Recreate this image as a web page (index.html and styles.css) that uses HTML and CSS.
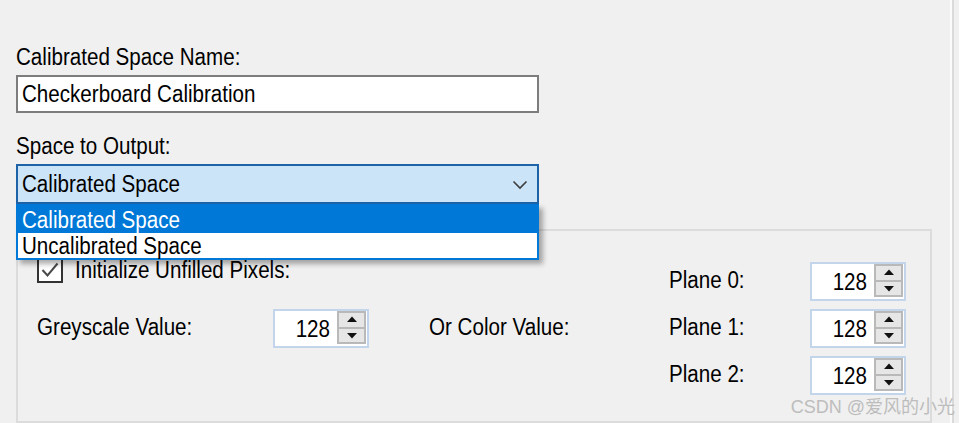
FILE: index.html
```html
<!DOCTYPE html>
<html lang="en">
<head>
<meta charset="utf-8">
<title>Calibration</title>
<link rel="stylesheet" href="styles.css">
</head>
<body>
<div class="window">
  <div class="panel">
    <div class="lbl"><span class="t">Calibrated Space Name:</span></div>
    <div class="textbox"><span class="t">Checkerboard Calibration</span></div>
    <div class="lbl lbl-output"><span class="t">Space to Output:</span></div>
    <div class="combo">
      <span class="combo-text"><span class="t">Calibrated Space</span></span>
      <svg class="chevron" width="16" height="10" viewBox="0 0 16 10"><polyline points="1.5,1.5 8,8 14.5,1.5" fill="none" stroke="#3c3c3c" stroke-width="1.6"/></svg>
      <ul class="dropdown">
        <li class="item item-selected"><span class="t">Calibrated Space</span></li>
        <li class="item item-plain"><span class="t">Uncalibrated Space</span></li>
      </ul>
    </div>
    <div class="group">
      <div class="group-left">
        <div class="check-row">
          <span class="checkbox"><svg width="22" height="22" viewBox="0 0 22 22"><polyline points="3.5,11 8.5,16.5 18.5,4.5" fill="none" stroke="#4a4a4a" stroke-width="2"/></svg></span>
          <span class="check-label"><span class="t">Initialize Unfilled Pixels:</span></span>
        </div>
        <div class="grey-row">
          <span class="row-label grey-label"><span class="t">Greyscale Value:</span></span>
          <div class="spinner">
            <span class="spin-value"><span class="t">128</span></span>
            <span class="spin-btns">
              <span class="spin-btn"><svg width="10" height="7" viewBox="0 0 10 7"><polygon points="0,6 5,0.5 10,6" fill="#111"/></svg></span>
              <span class="spin-btn spin-down"><svg width="10" height="7" viewBox="0 0 10 7"><polygon points="0,1 5,6.5 10,1" fill="#111"/></svg></span>
            </span>
          </div>
          <span class="row-label or-label"><span class="t">Or Color Value:</span></span>
        </div>
      </div>
      <div class="group-right">
        <div class="plane-row">
          <span class="row-label plane-label"><span class="t">Plane 0:</span></span>
          <div class="spinner">
            <span class="spin-value"><span class="t">128</span></span>
            <span class="spin-btns">
              <span class="spin-btn"><svg width="10" height="7" viewBox="0 0 10 7"><polygon points="0,6 5,0.5 10,6" fill="#111"/></svg></span>
              <span class="spin-btn spin-down"><svg width="10" height="7" viewBox="0 0 10 7"><polygon points="0,1 5,6.5 10,1" fill="#111"/></svg></span>
            </span>
          </div>
        </div>
        <div class="plane-row">
          <span class="row-label plane-label"><span class="t">Plane 1:</span></span>
          <div class="spinner">
            <span class="spin-value"><span class="t">128</span></span>
            <span class="spin-btns">
              <span class="spin-btn"><svg width="10" height="7" viewBox="0 0 10 7"><polygon points="0,6 5,0.5 10,6" fill="#111"/></svg></span>
              <span class="spin-btn spin-down"><svg width="10" height="7" viewBox="0 0 10 7"><polygon points="0,1 5,6.5 10,1" fill="#111"/></svg></span>
            </span>
          </div>
        </div>
        <div class="plane-row">
          <span class="row-label plane-label"><span class="t">Plane 2:</span></span>
          <div class="spinner">
            <span class="spin-value"><span class="t">128</span></span>
            <span class="spin-btns">
              <span class="spin-btn"><svg width="10" height="7" viewBox="0 0 10 7"><polygon points="0,6 5,0.5 10,6" fill="#111"/></svg></span>
              <span class="spin-btn spin-down"><svg width="10" height="7" viewBox="0 0 10 7"><polygon points="0,1 5,6.5 10,1" fill="#111"/></svg></span>
            </span>
          </div>
        </div>
      </div>
    </div>
  </div>
  <div class="rail"></div>
  <div class="watermark">CSDN @爱风的小光</div>
</div>
</body>
</html>
```
FILE: styles.css
```css
* { box-sizing: border-box; }

html, body {
  margin: 0;
  padding: 0;
  background: #f0f0f0;
  height: 423px;
  overflow: hidden;
}

body {
  font-family: "Liberation Sans", Arial, sans-serif;
  font-size: 20.6px;
  line-height: 28px;
  color: #000;
}

/* Windows-style tall, narrow text rendering */
.t {
  display: inline-block;
  line-height: 18px;
  transform: scaleY(1.2);
  transform-origin: 50% 50%;
  white-space: nowrap;
}

.window {
  position: relative;
  display: flex;
  height: 423px;
}

.panel {
  width: 952px;
  height: 423px;
  padding: 43px 0 0 16px;
  border-right: 2px solid #fbfbfb;
}

.rail {
  width: 2px;
  height: 423px;
  background: #dadada;
}

.lbl {
  height: 28px;
  white-space: nowrap;
}

.textbox {
  margin-top: 4px;
  width: 523px;
  height: 38px;
  border: 2px solid #7d7d7d;
  background: #fff;
  padding-left: 4px;
  line-height: 34px;
  white-space: nowrap;
}

.lbl-output {
  margin-top: 19px;
}

.combo {
  position: relative;
  margin-top: 4px;
  width: 523px;
  height: 40px;
  border: 2px solid #1e63a8;
  background: #cce4f7;
  padding-left: 4px;
  display: flex;
  align-items: center;
  line-height: 36px;
  z-index: 5;
}

.combo-text {
  flex: 1;
  white-space: nowrap;
}

.chevron {
  margin-right: 9px;
  margin-top: 1px;
}

.dropdown {
  position: absolute;
  left: -2px;
  top: calc(100% + 2px);
  width: 523px;
  margin: 0;
  padding: 0;
  list-style: none;
  border: 2px solid #0078d7;
  border-top: 0;
  background: #fff;
  box-shadow: 4px 4px 5px rgba(0, 0, 0, 0.32);
}

.item {
  padding-left: 4px;
  white-space: nowrap;
}

.item-selected {
  background: #0078d7;
  color: #fff;
  height: 29px;
  padding-top: 3px;
  line-height: 26px;
}

.item-plain {
  height: 25px;
  line-height: 26px;
}

.group {
  margin-top: 25px;
  width: 916px;
  height: 194px;
  border: 2px solid #dcdcdc;
  display: flex;
}

.group-left {
  width: 651px;
  padding: 26px 0 0 19px;
  display: flex;
  flex-direction: column;
  gap: 26px;
}

.check-row {
  display: flex;
  align-items: center;
  height: 26px;
}

.checkbox {
  width: 26px;
  height: 26px;
  border: 2px solid #333;
  background: #fff;
  display: flex;
  align-items: center;
  justify-content: center;
  margin-right: 12px;
}

.check-label {
  white-space: nowrap;
  line-height: 21px;
  padding-bottom: 1px;
}

.grey-row {
  display: flex;
  align-items: center;
  height: 39px;
}

.row-label {
  white-space: nowrap;
  padding-bottom: 4px;
}

.grey-label {
  width: 236px;
}

.or-label {
  margin-left: 60px;
}

.group-right {
  padding-top: 31px;
  display: flex;
  flex-direction: column;
  gap: 8px;
}

.plane-row {
  display: flex;
  align-items: center;
  height: 39px;
}

.plane-label {
  width: 141px;
}

.spinner {
  width: 96px;
  height: 39px;
  border: 2px solid #c3d5ea;
  background: #fff;
  display: flex;
  align-items: flex-start;
}

.spin-value {
  flex: 1;
  text-align: right;
  padding-right: 7px;
  line-height: 35px;
}

.spin-btns {
  width: 29px;
  height: 33px;
  margin: 0 1px 0 0;
  border: 2px solid #b9b9b9;
  background: #e6e6e6;
  display: flex;
  flex-direction: column;
}

.spin-btn {
  flex: 1;
  display: flex;
  align-items: center;
  justify-content: center;
}

.spin-down {
  border-top: 2px solid #b9b9b9;
}

.watermark {
  position: absolute;
  right: 4px;
  bottom: 5px;
  font-family: "Liberation Sans", "Noto Sans CJK SC", sans-serif;
  font-size: 18px;
  line-height: 22px;
  color: #bdbdbd;
  white-space: nowrap;
  z-index: 10;
}
```
